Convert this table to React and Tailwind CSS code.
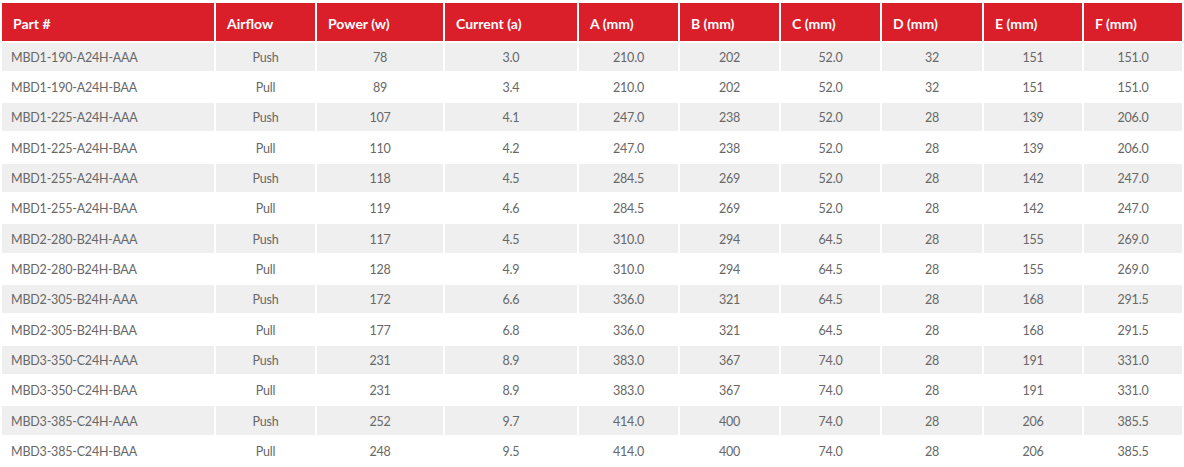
import React from "react";

const headers = [
  "Part #",
  "Airflow",
  "Power (w)",
  "Current (a)",
  "A (mm)",
  "B (mm)",
  "C (mm)",
  "D (mm)",
  "E (mm)",
  "F (mm)",
];

const widths = [212, 99, 126, 132, 99, 99, 99, 100, 98, 98];

const rows = [
  ["MBD1-190-A24H-AAA", "Push", "78", "3.0", "210.0", "202", "52.0", "32", "151", "151.0"],
  ["MBD1-190-A24H-BAA", "Pull", "89", "3.4", "210.0", "202", "52.0", "32", "151", "151.0"],
  ["MBD1-225-A24H-AAA", "Push", "107", "4.1", "247.0", "238", "52.0", "28", "139", "206.0"],
  ["MBD1-225-A24H-BAA", "Pull", "110", "4.2", "247.0", "238", "52.0", "28", "139", "206.0"],
  ["MBD1-255-A24H-AAA", "Push", "118", "4.5", "284.5", "269", "52.0", "28", "142", "247.0"],
  ["MBD1-255-A24H-BAA", "Pull", "119", "4.6", "284.5", "269", "52.0", "28", "142", "247.0"],
  ["MBD2-280-B24H-AAA", "Push", "117", "4.5", "310.0", "294", "64.5", "28", "155", "269.0"],
  ["MBD2-280-B24H-BAA", "Pull", "128", "4.9", "310.0", "294", "64.5", "28", "155", "269.0"],
  ["MBD2-305-B24H-AAA", "Push", "172", "6.6", "336.0", "321", "64.5", "28", "168", "291.5"],
  ["MBD2-305-B24H-BAA", "Pull", "177", "6.8", "336.0", "321", "64.5", "28", "168", "291.5"],
  ["MBD3-350-C24H-AAA", "Push", "231", "8.9", "383.0", "367", "74.0", "28", "191", "331.0"],
  ["MBD3-350-C24H-BAA", "Pull", "231", "8.9", "383.0", "367", "74.0", "28", "191", "331.0"],
  ["MBD3-385-C24H-AAA", "Push", "252", "9.7", "414.0", "400", "74.0", "28", "206", "385.5"],
  ["MBD3-385-C24H-BAA", "Pull", "248", "9.5", "414.0", "400", "74.0", "28", "206", "385.5"],
];

export default function App() {
  return (
    <div className="w-[1184px] h-[467px] overflow-hidden bg-white pt-px font-['Lato',sans-serif]">
      <table className="w-[1184px] table-fixed border-separate border-spacing-[2px]">
        <colgroup>
          {widths.map((w, i) => (
            <col key={i} style={{ width: w }} />
          ))}
        </colgroup>
        <thead>
          <tr>
            {headers.map((h) => (
              <th
                key={h}
                className="h-[37.5px] bg-[#da1f2b] px-[11px] pt-[3px] text-left align-middle text-[14px] font-bold text-white"
              >
                {h}
              </th>
            ))}
          </tr>
        </thead>
        <tbody>
          {rows.map((r, i) => (
            <tr key={i} className={i % 2 === 0 ? "bg-[#efefef]" : "bg-white"}>
              {r.map((c, j) => (
                <td
                  key={j}
                  className={
                    "h-[28.33px] px-0 pt-[3px] pb-0 align-middle text-[12.5px] tracking-[-0.2px] text-[#676767] " +
                    (j === 0 ? "pl-[9px] text-left" : "text-center")
                  }
                >
                  {c}
                </td>
              ))}
            </tr>
          ))}
        </tbody>
      </table>
    </div>
  );
}
